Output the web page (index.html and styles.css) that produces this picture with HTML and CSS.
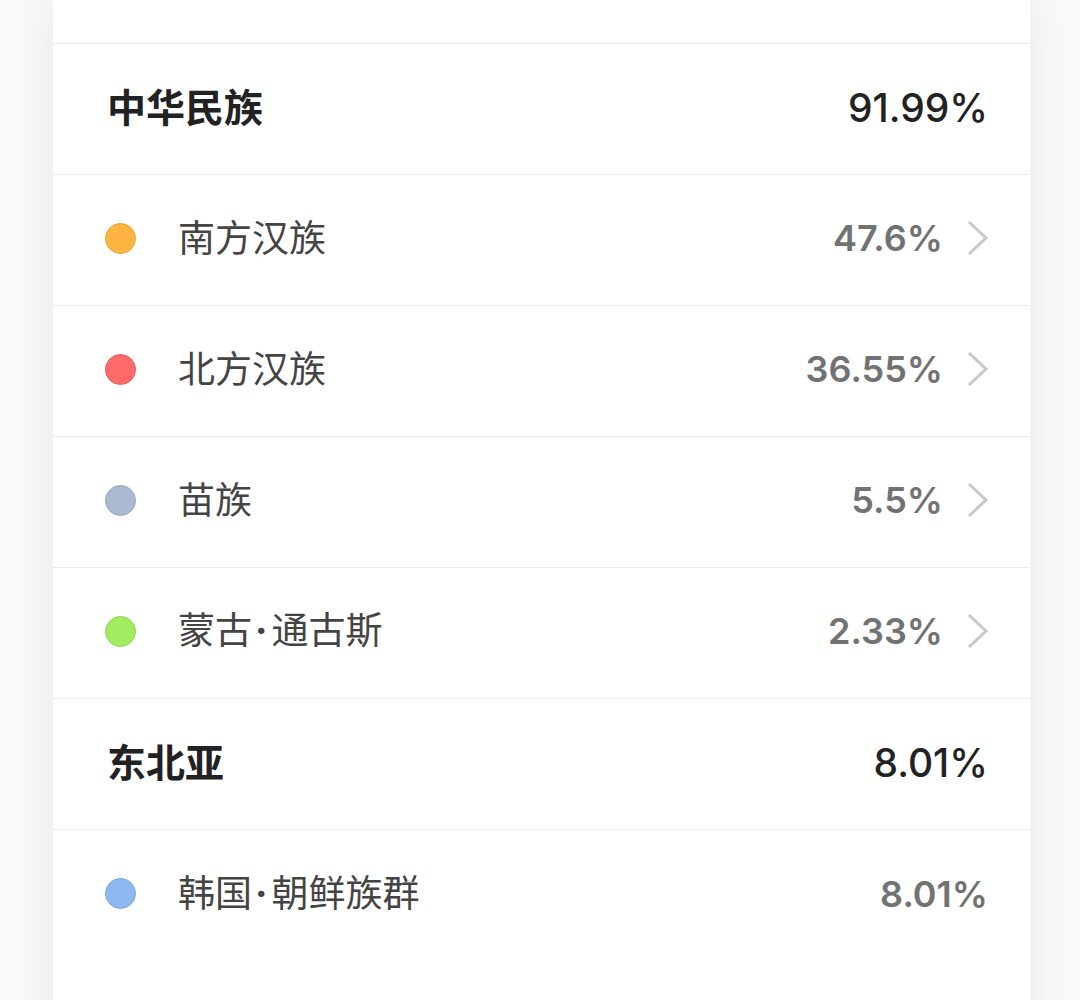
FILE: index.html
```html
<!DOCTYPE html>
<html lang="zh-CN">
<head>
<meta charset="utf-8">
<link rel="stylesheet" href="styles.css">
</head>
<body>
<div class="card">
  <div class="top"></div>
  <div class="row group">
    <span class="name">中华民族</span>
    <span class="pct">91.99%</span>
  </div>
  <div class="row sub">
    <span class="dot orange"></span>
    <span class="name">南方汉族</span>
    <span class="pct">47.6%</span>
    <svg class="chev" viewBox="0 0 24 36"><path d="M3 2 L20 18 L3 34"/></svg>
  </div>
  <div class="row sub">
    <span class="dot red"></span>
    <span class="name">北方汉族</span>
    <span class="pct">36.55%</span>
    <svg class="chev" viewBox="0 0 24 36"><path d="M3 2 L20 18 L3 34"/></svg>
  </div>
  <div class="row sub">
    <span class="dot slate"></span>
    <span class="name">苗族</span>
    <span class="pct">5.5%</span>
    <svg class="chev" viewBox="0 0 24 36"><path d="M3 2 L20 18 L3 34"/></svg>
  </div>
  <div class="row sub">
    <span class="dot green"></span>
    <span class="name">蒙古<span class="sep">·</span>通古斯</span>
    <span class="pct">2.33%</span>
    <svg class="chev" viewBox="0 0 24 36"><path d="M3 2 L20 18 L3 34"/></svg>
  </div>
  <div class="row group">
    <span class="name">东北亚</span>
    <span class="pct">8.01%</span>
  </div>
  <div class="row sub last">
    <span class="dot blue"></span>
    <span class="name">韩国<span class="sep">·</span>朝鲜族群</span>
    <span class="pct">8.01%</span>
  </div>
</div>
</body>
</html>
```

FILE: styles.css
```css
html, body {
  margin: 0;
  padding: 0;
}
body {
  background: #f9f9f9;
  height: 1000px;
  overflow: hidden;
  font-family: "Noto Sans", "Noto Sans CJK SC", sans-serif;
}
.card {
  margin-left: 53px;
  width: 977px;
  min-height: 1100px;
  background: #fff;
  box-shadow: 0 0 40px rgba(0, 0, 0, 0.07);
}
.top {
  height: 43px;
  border-bottom: 1px solid #ececec;
}
.row {
  height: 131px;
  box-sizing: border-box;
  border-bottom: 1px solid #ececec;
  display: flex;
  align-items: center;
  padding: 0 42px 4px 52px;
}
.row.last {
  border-bottom: none;
}
.name {
  flex: 1;
  line-height: 1;
  padding-bottom: 4px;
  font-family: "Noto Sans CJK SC", sans-serif;
}
.group .name {
  padding-left: 2px;
  font-size: 39px;
  font-weight: 700;
  color: #222;
}
.group .pct {
  font-family: "Inter", sans-serif;
  font-size: 39px;
  font-weight: 500;
  color: #222;
}
.sub .name {
  font-size: 37px;
  font-weight: 400;
  color: #444;
  margin-left: 42px;
}
.sep {
  font-family: "Noto Sans", sans-serif;
  font-weight: 700;
  padding: 0 5px 0 4px;
}
.sub .pct {
  font-family: "Inter", sans-serif;
  font-size: 36px;
  font-weight: 600;
  color: #727272;
}
.dot {
  width: 31px;
  height: 31px;
  border-radius: 50%;
  box-sizing: border-box;
  flex-shrink: 0;
}
.orange { background: #ffb53f; border: 1px solid #e8a030; }
.red { background: #ff6a6a; border: 1px solid #e85a5a; }
.slate { background: #abb9d1; border: 1px solid #97a6be; }
.green { background: #a3eb5f; border: 1px solid #8fd24f; }
.blue { background: #8eb9f0; border: 1px solid #7aa5dc; }
.chev {
  width: 24px;
  height: 36px;
  margin-left: 23px;
  margin-right: -2px;
  fill: none;
  stroke: #c8c8c8;
  stroke-width: 3;
}
```
